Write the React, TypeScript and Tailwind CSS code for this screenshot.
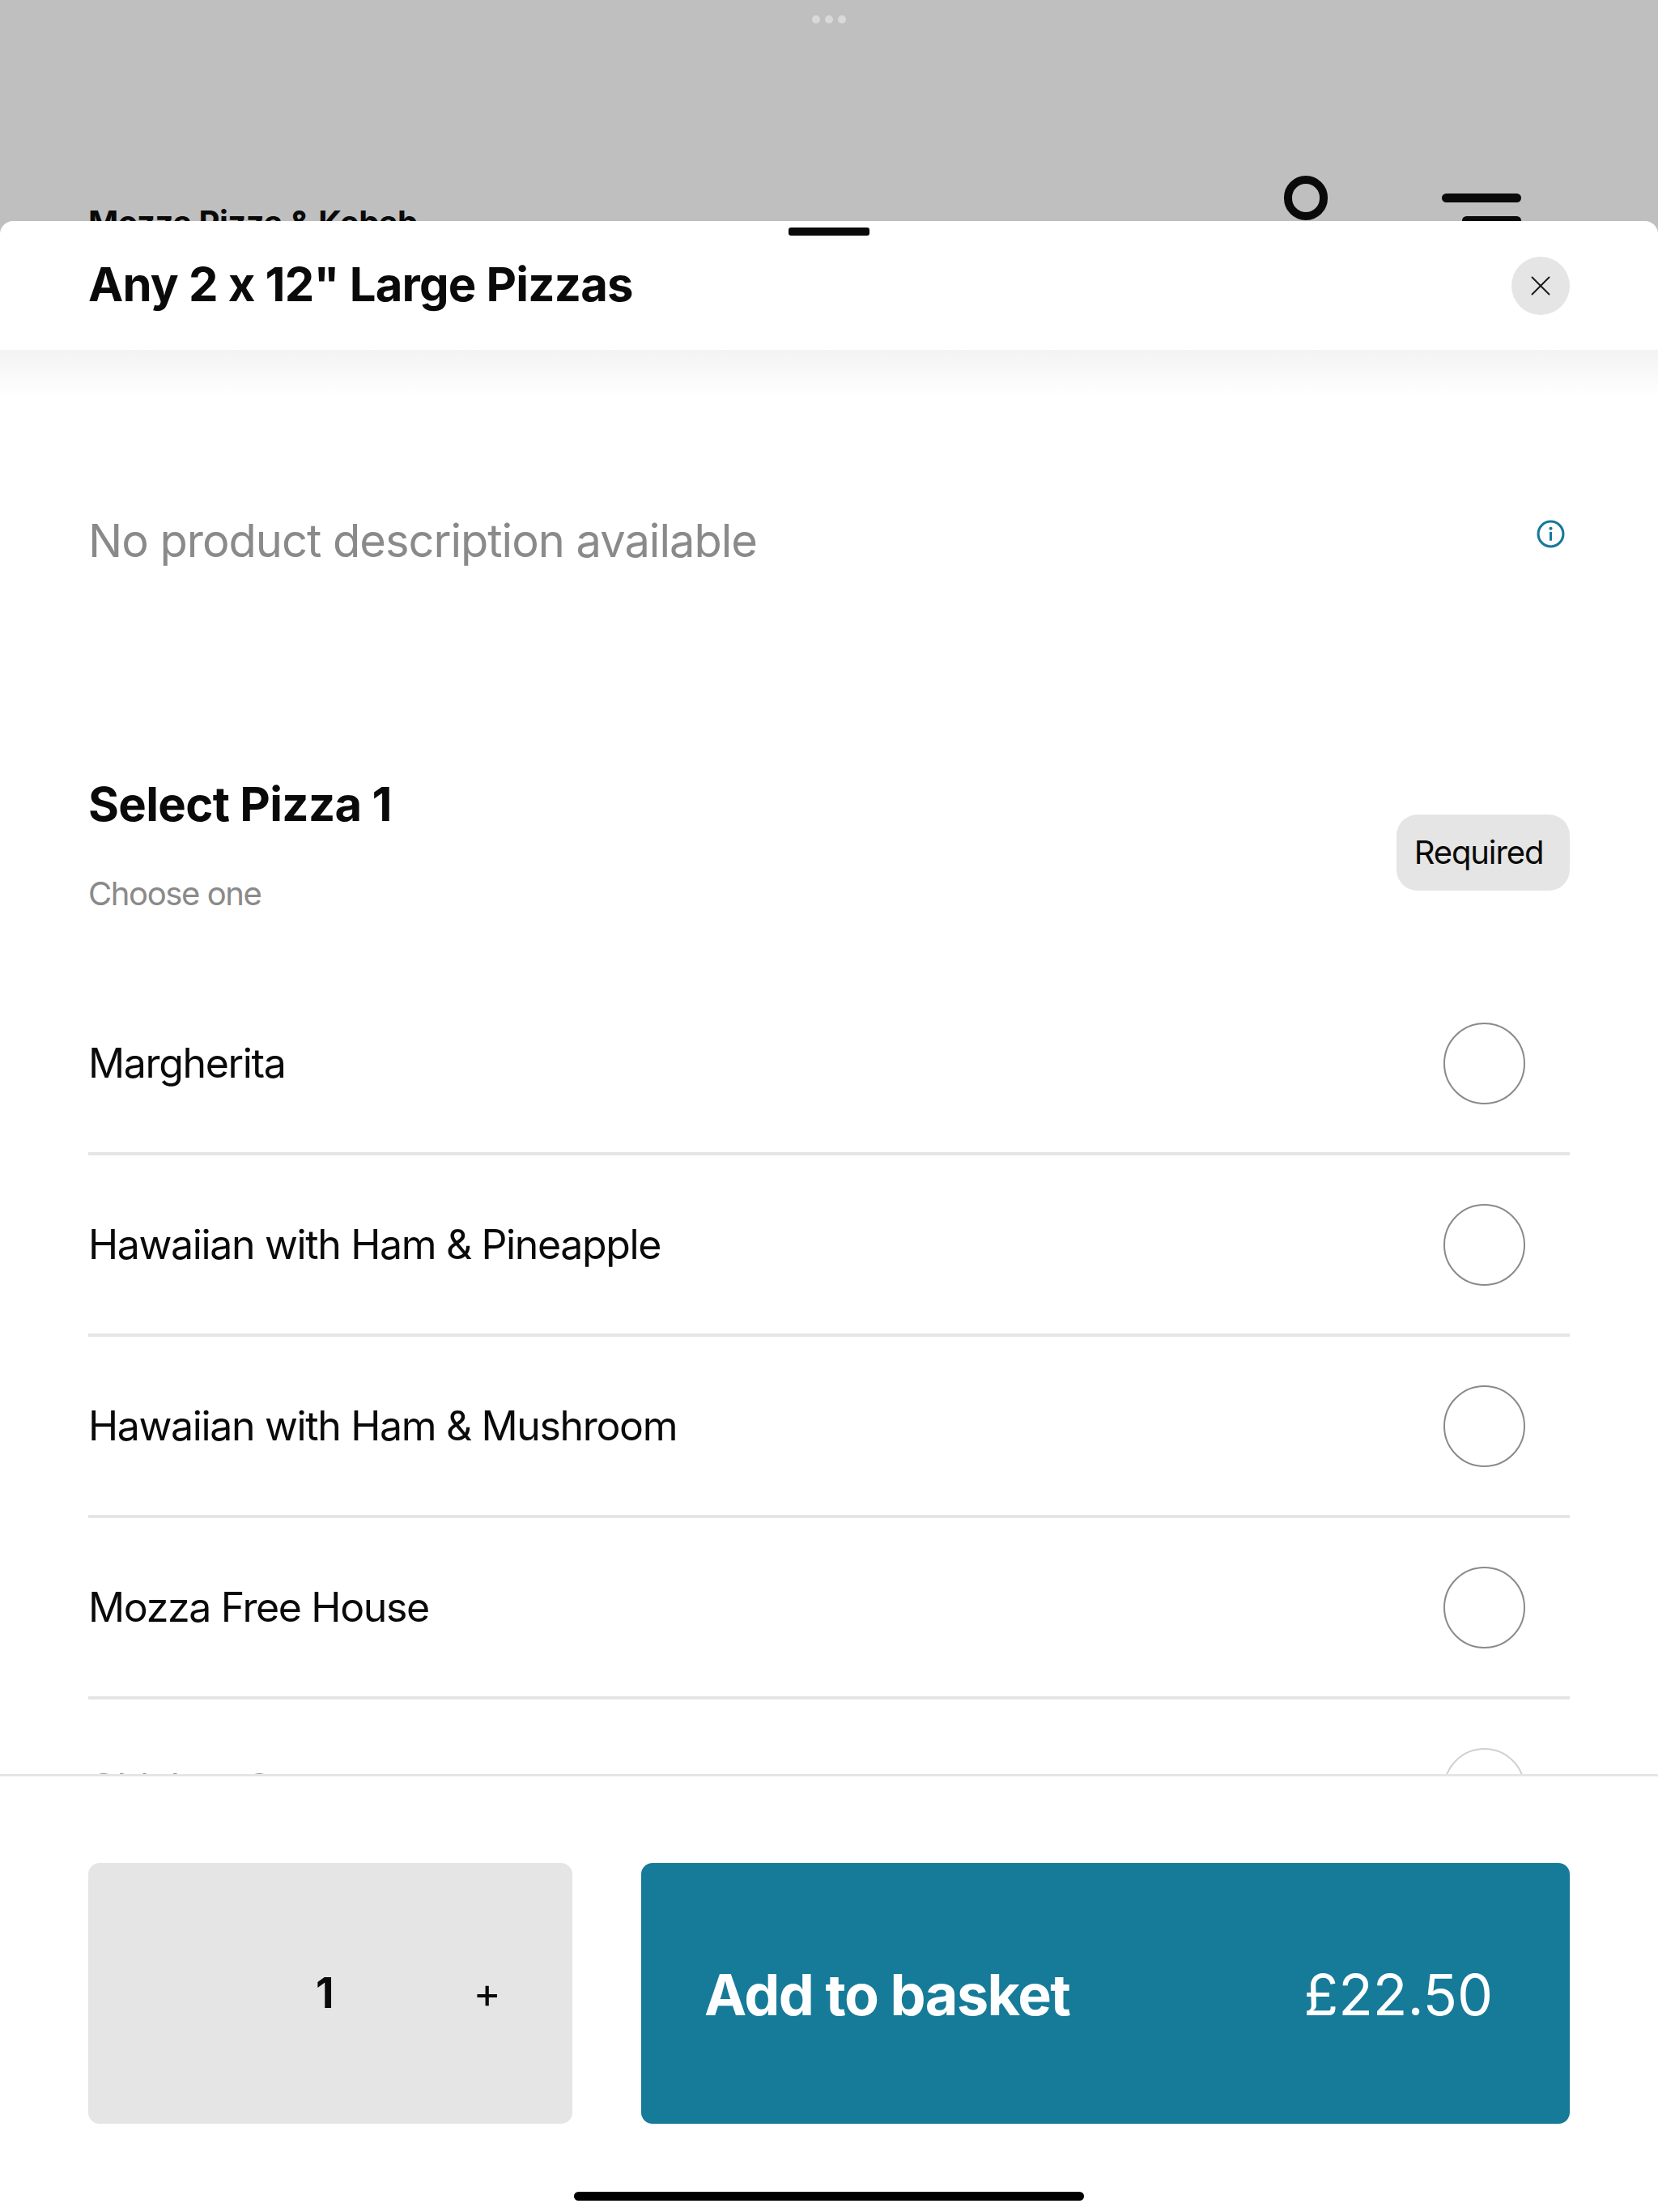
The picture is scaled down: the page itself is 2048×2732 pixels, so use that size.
import { X } from 'lucide-react';

const pizzas = ['Margherita', 'Hawaiian with Ham & Pineapple', 'Hawaiian with Ham & Mushroom', 'Mozza Free House'];

function OptionRow({ name }: { name: string }) {
  return (
    <div className="flex h-[224px] items-center justify-between border-b-[4px] border-[#e5e5e5] pr-[55px]">
      <span className="text-[50px] leading-none tracking-[-1.35px] text-[#0a0a0a]">{name}</span>
      <span className="h-[101px] w-[101px] rounded-full border-2 border-[#8a8a8a]" />
    </div>
  );
}

export default function App() {
  return (
    <div className="flex h-[2732px] w-[2048px] flex-col overflow-hidden bg-[#bfbfbf] font-['Inter',sans-serif]">
      {/* Page behind the sheet */}
      <div className="h-[273px] shrink-0 overflow-hidden">
        <div className="flex justify-center gap-[6px] pt-[19px]">
          <span className="h-[10px] w-[10px] rounded-full bg-[#d9d9d9]" />
          <span className="h-[10px] w-[10px] rounded-full bg-[#d9d9d9]" />
          <span className="h-[10px] w-[10px] rounded-full bg-[#d9d9d9]" />
        </div>
        <div className="mt-[188px] flex items-start pl-[109px] pr-[169px]">
          <span className="mt-[38px] flex-1 text-[40px] font-bold leading-none tracking-[-0.5px] text-[#0a0a0a]">Mozza Pizza &amp; Kebab</span>
          <span className="box-border h-[55px] w-[54px] rounded-full border-[10px] border-[#0a0a0a]" />
          <div className="ml-[141px] mt-[22px] flex w-[98px] flex-col items-end gap-[17px]">
            <span className="h-[11px] w-[98px] rounded-full bg-[#0a0a0a]" />
            <span className="h-[11px] w-[73px] rounded-full bg-[#0a0a0a]" />
          </div>
        </div>
      </div>

      {/* Sheet */}
      <div className="flex min-h-0 flex-1 flex-col rounded-t-[16px] bg-white">
        <header className="relative flex h-[159px] shrink-0 items-center justify-between pl-[109px] pr-[109px]">
          <span className="absolute left-[974px] top-[8px] h-[10px] w-[100px] rounded-[3px] bg-[#0a0a0a]" />
          <h1 className="mb-[3px] text-[58px] font-bold leading-none tracking-[-0.78px] text-[#0a0a0a]">Any 2 x 12" Large Pizzas</h1>
          <button className="flex h-[72px] w-[72px] items-center justify-center rounded-full bg-[#e5e5e5]">
            <X size={42} strokeWidth={1.1} className="text-[#1a1a1a]" />
          </button>
        </header>

        <main className="min-h-0 flex-1 overflow-hidden">
          <div className="h-[58px] bg-gradient-to-b from-[#f3f3f3] to-white" />
          <div className="mt-[150px] flex items-start justify-between pl-[109px] pr-[115px]">
            <p className="text-[56px] leading-[56px] tracking-[-1px] text-[#8a8a8a]">No product description available</p>
            <svg width="35" height="35" viewBox="0 0 34 34" fill="none" className="mt-[2px] text-[#167a99]">
              <circle cx="17" cy="17" r="15" stroke="currentColor" strokeWidth="3" />
              <circle cx="17" cy="10.5" r="2" fill="currentColor" />
              <rect x="15.5" y="14.5" width="3" height="10.5" fill="currentColor" />
            </svg>
          </div>

          <section className="mt-[268px] pl-[109px] pr-[109px]">
            <div className="flex items-center justify-between">
              <div>
                <h2 className="text-[58px] font-bold leading-none tracking-[-0.65px] text-[#0a0a0a]">Select Pizza 1</h2>
                <p className="mt-[62px] text-[40px] leading-none tracking-[-1.4px] text-[#8a8a8a]">Choose one</p>
              </div>
              <span className="mt-[18px] flex h-[94px] w-[214px] items-center justify-center rounded-[26px] bg-[#e5e5e5] pr-[11px] text-[40px] tracking-[-1.1px] text-[#0a0a0a]">
                Required
              </span>
            </div>
            <div className="mt-[79px]">
              {pizzas.map((name) => (
                <OptionRow key={name} name={name} />
              ))}
              <div className="opacity-40">
                <OptionRow name="Chicken Supreme" />
              </div>
            </div>
          </section>
        </main>

        <footer className="flex h-[541px] shrink-0 flex-col border-t-[3px] border-[#e5e5e5] px-[109px]">
          <div className="mt-[107px] flex h-[322px] gap-[85px]">
            <div className="flex w-[598px] items-center rounded-[14px] bg-[#e5e5e5] pl-[281px]">
              <span className="text-[52px] font-bold leading-none text-[#0a0a0a]">1</span>
              <span className="ml-[172px] text-[52px] leading-none text-[#0a0a0a]">+</span>
            </div>
            <button className="flex flex-1 items-center justify-between rounded-[14px] bg-[#167a99] pl-[78px] pr-[95px] pt-[3px] text-white">
              <span className="text-[70px] font-bold leading-none tracking-[-1.5px]">Add to basket</span>
              <span className="text-[70px] leading-none tracking-[-0.1px]">£22.50</span>
            </button>
          </div>
          <div className="mt-[84px] h-[11px] w-[630px] self-center rounded-full bg-black" />
        </footer>
      </div>
    </div>
  );
}
